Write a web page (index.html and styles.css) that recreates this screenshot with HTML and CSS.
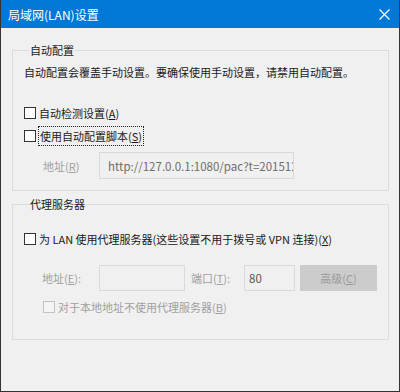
FILE: index.html
```html
<!DOCTYPE html>
<html lang="zh-CN">

<head>
  <meta charset="UTF-8">
  <title>局域网(LAN)设置</title>
  <link rel="stylesheet" href="styles.css">
</head>

<body>
  <div class="vindue">
    <header class="titel">
      <span>局域网(LAN)设置</span>
      <svg class="luk" width="11" height="11" viewBox="0 0 11 11">
        <path d="M0.5 0.5 L10.5 10.5 M10.5 0.5 L0.5 10.5" stroke="#fff" stroke-width="1.2" fill="none" />
      </svg>
    </header>

    <div class="indhold">
      <fieldset class="gruppe auto">
        <legend>自动配置</legend>
        <p class="info">自动配置会覆盖手动设置。要确保使用手动设置，请禁用自动配置。</p>

        <div class="række tjek første">
          <span class="boks"></span>
          <span>自动检测设置(<u>A</u>)</span>
        </div>
        <div class="række tjek">
          <span class="boks"></span>
          <span class="fokus">使用自动配置脚本(<u>S</u>)</span>
        </div>
        <div class="række felt-række">
          <span class="slukket etiket-r">地址(<u>R</u>)</span>
          <div class="felt url">http://127.0.0.1:1080/pac?t=20151230</div>
        </div>
      </fieldset>

      <fieldset class="gruppe proxy">
        <legend>代理服务器</legend>

        <div class="række tjek proxy-tjek">
          <span class="boks"></span>
          <span>为 LAN 使用代理服务器(这些设置不用于拨号或 VPN 连接)(<u>X</u>)</span>
        </div>
        <div class="række felt-række adresse">
          <span class="slukket etiket-e">地址(<u>E</u>):</span>
          <div class="felt adr"></div>
          <span class="slukket etiket-t">端口(<u>T</u>):</span>
          <div class="felt port">80</div>
          <div class="knap">高级(<u>C</u>)</div>
        </div>
        <div class="række tjek lokal">
          <span class="boks slukket-boks"></span>
          <span class="slukket">对于本地地址不使用代理服务器(<u>B</u>)</span>
        </div>
      </fieldset>
    </div>
  </div>
</body>

</html>
```

FILE: styles.css
```css
* {
  box-sizing: border-box;
}

body {
  margin: 0;
  font-family: "Noto Sans CJK SC", "Liberation Sans", sans-serif;
  font-size: 11px;
  color: #1a1a1a;
}

.vindue {
  width: 400px;
  height: 392px;
  background: #f0f0f0;
  border: 1px solid #333;
  border-top: none;
  overflow: hidden;
}

.titel {
  height: 28px;
  background: #0078d7;
  color: #fff;
  font-size: 12px;
  display: flex;
  align-items: center;
  justify-content: space-between;
  padding: 0 9px 0 7px;
}

.indhold {
  padding: 15px 10px 0 11px;
}

.gruppe {
  margin: 0;
  border: 1px solid #dcdcdc;
  padding: 0 10px 11px 11px;
  min-width: 0;
}

.gruppe legend {
  padding: 0 1px;
  margin-left: 5px;
  line-height: 14px;
}

.info {
  margin: 7px 0 0;
  line-height: 16px;
}

.række {
  display: flex;
  align-items: center;
}

.tjek {
  height: 18px;
  margin-top: 5px;
}

.første {
  margin-top: 24px;
}

.boks {
  width: 12px;
  height: 12px;
  border: 1px solid #333;
  background: #fff;
  margin-right: 3px;
  flex: none;
}

.slukket-boks {
  border-color: #c4c4c4;
  background: #f4f4f4;
}

.fokus {
  outline: 1px dotted #222;
  padding: 1px 1px;
}

.slukket {
  color: #a0a0a0;
}

.felt-række {
  margin-top: 7px;
}

.etiket-r {
  margin-left: 19px;
  width: 56px;
}

.felt {
  height: 27px;
  border: 1px solid #d9d9d9;
  color: #6d6d6d;
  font-size: 11.5px;
  padding: 0 8px;
  display: flex;
  align-items: center;
  overflow: hidden;
  white-space: nowrap;
}

.url {
  width: 195px;
}

.gruppe.proxy {
  margin-top: 6px;
  padding-bottom: 23px;
}

.proxy-tjek {
  margin-top: 19px;
}

.adresse {
  margin-top: 17px;
}

.adresse .felt {
  height: 26px;
}

.etiket-e {
  margin-left: 18px;
  width: 57px;
}

.adr {
  width: 86px;
}

.etiket-t {
  margin-left: 6px;
  width: 53px;
}

.port {
  width: 51px;
  color: #555;
  padding: 0 4px;
}

.knap {
  width: 77px;
  height: 26px;
  margin-left: 5px;
  background: #cccccc;
  color: #9a9a9a;
  display: flex;
  align-items: center;
  justify-content: center;
}

.lokal {
  margin-top: 7px;
  padding-left: 19px;
}
```
